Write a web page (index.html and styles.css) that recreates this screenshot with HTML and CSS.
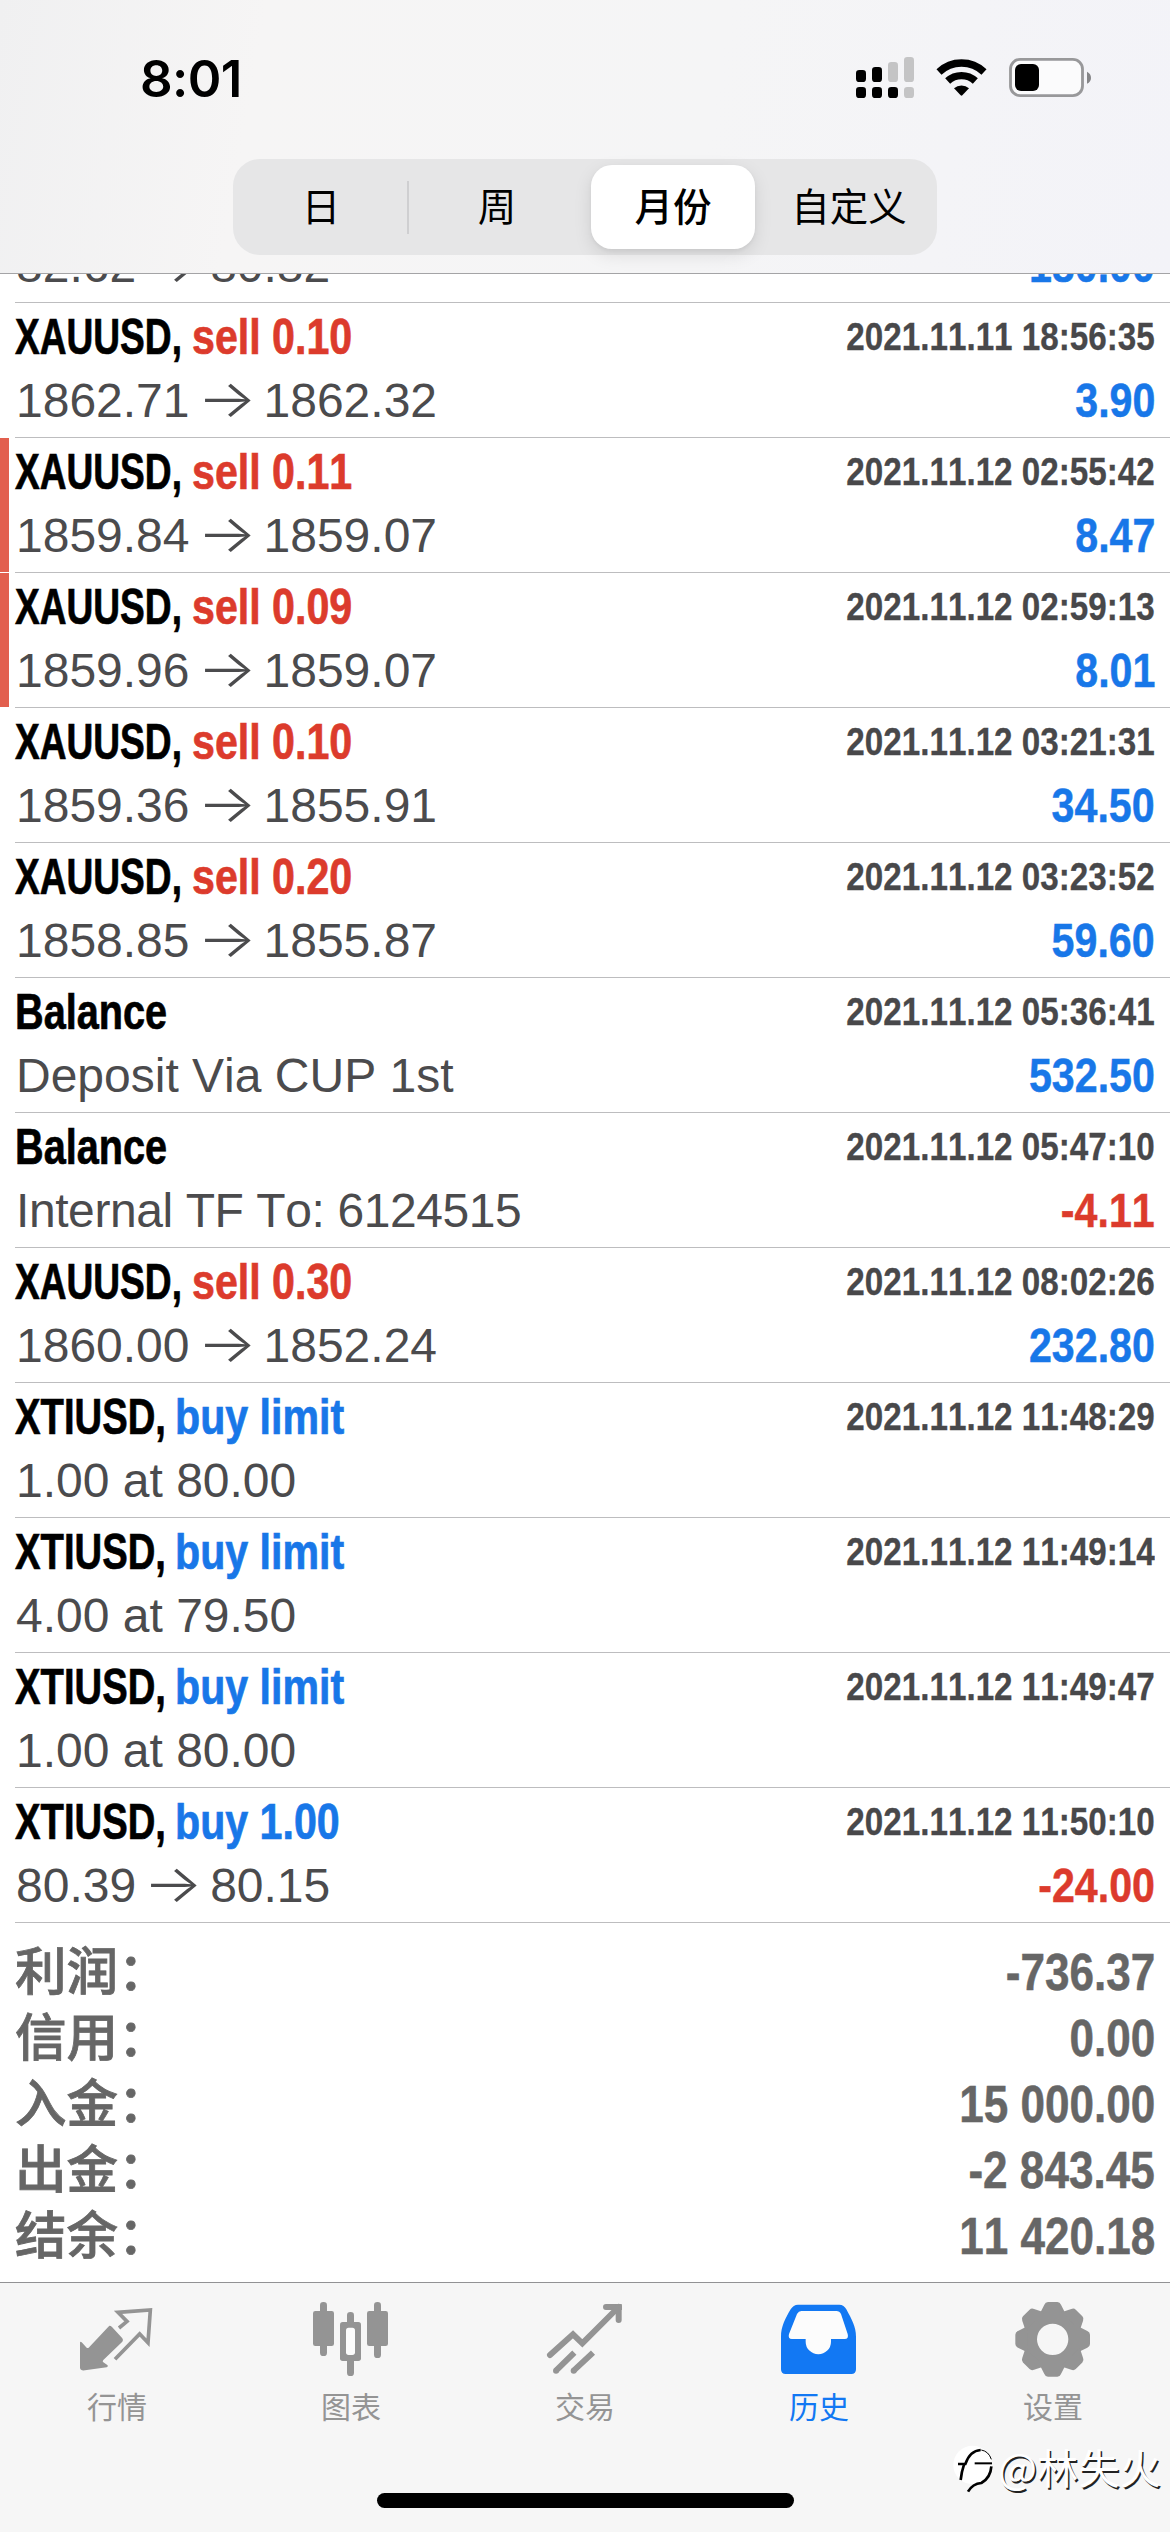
FILE: index.html
```html
<!DOCTYPE html>
<html lang="zh-CN">
<head>
<meta charset="utf-8">
<title>历史</title>
<link rel="stylesheet" href="styles.css">
</head>
<body>
<div class="screen">
  <header class="header">
    <div class="status">
      <span class="time">8:01</span>
      <div class="indicators">
        <svg width="58" height="42" viewBox="48 51 174 126">
          <g fill="#000"><rect x="48" y="90" width="30" height="36" rx="10"/><rect x="96" y="81" width="30" height="45" rx="10"/><rect x="48" y="141" width="30" height="33" rx="10"/><rect x="96" y="141" width="30" height="33" rx="10"/><rect x="144" y="141" width="30" height="33" rx="10"/></g>
          <g fill="#c4c4c5"><rect x="144" y="66" width="30" height="60" rx="10"/><rect x="192" y="51" width="30" height="75" rx="10"/><rect x="192" y="141" width="30" height="33" rx="10"/></g>
        </svg>
        <svg width="51" height="42" viewBox="288 51 153 126">
          <g fill="none" stroke="#000" stroke-width="22"><path d="M297 96a98 98 0 0 1 135 0"/><path d="M323 123a61 61 0 0 1 83 0"/></g>
          <path d="M342 145a33 33 0 0 1 45 0l-20 21q-2 2-5 0z"/>
        </svg>
        <svg width="83" height="42" viewBox="507 51 249 126">
          <rect x="511.500" y="58" width="216" height="109" rx="29" fill="#fbfbfc" stroke="#98989a" stroke-width="8.500"/>
          <rect x="525" y="72" width="72" height="81" rx="18"/>
          <path d="M741 95q12 6 12 18t-12 18z" fill="#858587"/>
        </svg>
      </div>
    </div>
    <nav class="segments">
      <span class="segment divided">日</span>
      <span class="segment">周</span>
      <span class="segment selected">月份</span>
      <span class="segment">自定义</span>
    </nav>
  </header>

  <main class="history">
    <div class="row first"><div class="title"><span class="symbol xti">XTIUSD,</span><span class="op sell">sell 1.00</span></div><time>2021.11.11 16:30:12</time><div class="detail">82.62<i class="arrow">→</i>80.82</div><div class="amount plus">180.00</div></div>
    <div class="row"><div class="title"><span class="symbol xau">XAUUSD,</span><span class="op sell">sell 0.10</span></div><time>2021.11.11 18:56:35</time><div class="detail">1862.71<i class="arrow">→</i>1862.32</div><div class="amount plus">3.90</div></div>
    <div class="row flagged"><div class="title"><span class="symbol xau">XAUUSD,</span><span class="op sell">sell 0.11</span></div><time>2021.11.12 02:55:42</time><div class="detail">1859.84<i class="arrow">→</i>1859.07</div><div class="amount plus">8.47</div></div>
    <div class="row flagged"><div class="title"><span class="symbol xau">XAUUSD,</span><span class="op sell">sell 0.09</span></div><time>2021.11.12 02:59:13</time><div class="detail">1859.96<i class="arrow">→</i>1859.07</div><div class="amount plus">8.01</div></div>
    <div class="row"><div class="title"><span class="symbol xau">XAUUSD,</span><span class="op sell">sell 0.10</span></div><time>2021.11.12 03:21:31</time><div class="detail">1859.36<i class="arrow">→</i>1855.91</div><div class="amount plus">34.50</div></div>
    <div class="row"><div class="title"><span class="symbol xau">XAUUSD,</span><span class="op sell">sell 0.20</span></div><time>2021.11.12 03:23:52</time><div class="detail">1858.85<i class="arrow">→</i>1855.87</div><div class="amount plus">59.60</div></div>
    <div class="row"><div class="title"><span class="balance">Balance</span></div><time>2021.11.12 05:36:41</time><div class="detail">Deposit Via CUP 1st</div><div class="amount plus">532.50</div></div>
    <div class="row"><div class="title"><span class="balance">Balance</span></div><time>2021.11.12 05:47:10</time><div class="detail transfer">Internal TF To: 6124515</div><div class="amount minus">-4.11</div></div>
    <div class="row"><div class="title"><span class="symbol xau">XAUUSD,</span><span class="op sell">sell 0.30</span></div><time>2021.11.12 08:02:26</time><div class="detail">1860.00<i class="arrow">→</i>1852.24</div><div class="amount plus">232.80</div></div>
    <div class="row"><div class="title"><span class="symbol xti">XTIUSD,</span><span class="op buy">buy limit</span></div><time>2021.11.12 11:48:29</time><div class="detail">1.00 at 80.00</div></div>
    <div class="row"><div class="title"><span class="symbol xti">XTIUSD,</span><span class="op buy">buy limit</span></div><time>2021.11.12 11:49:14</time><div class="detail">4.00 at 79.50</div></div>
    <div class="row"><div class="title"><span class="symbol xti">XTIUSD,</span><span class="op buy">buy limit</span></div><time>2021.11.12 11:49:47</time><div class="detail">1.00 at 80.00</div></div>
    <div class="row"><div class="title"><span class="symbol xti">XTIUSD,</span><span class="op buy">buy 1.00</span></div><time>2021.11.12 11:50:10</time><div class="detail">80.39<i class="arrow">→</i>80.15</div><div class="amount minus">-24.00</div></div>

    <dl class="summary">
      <div><dt>利润&#xFF1A;</dt><dd>-736.37</dd></div>
      <div><dt>信用&#xFF1A;</dt><dd>0.00</dd></div>
      <div><dt>入金&#xFF1A;</dt><dd>15 000.00</dd></div>
      <div><dt>出金&#xFF1A;</dt><dd>-2 843.45</dd></div>
      <div><dt>结余&#xFF1A;</dt><dd>11 420.18</dd></div>
    </dl>
  </main>

  <footer class="footer">
    <nav class="tabs">
      <span class="tab">
        <svg viewBox="21 0 300 300">
          <path d="M148 107q5 0 8 4l31 34q4 5 0 10l-57 55q-4 4 0 7l13 9q2 4-3 6l-65 9q-14 2-15-8v-74q0-6 5-2l15 16q3 2 6 0z"/>
          <path d="M177 114l24-20-27-27 97-7-7 98-25-26-74 76" fill="none" stroke="currentColor" stroke-width="11"/>
        </svg>
        行情
      </span>
      <span class="tab">
        <svg viewBox="723 0 300 300">
          <rect x="759" y="63" width="63" height="105" rx="7"/><rect x="780" y="36" width="21" height="162" rx="10"/>
          <rect x="921" y="63" width="63" height="105" rx="7"/><rect x="942" y="36" width="21" height="168" rx="10"/>
          <rect x="840" y="96" width="63" height="117" rx="8"/><rect x="861" y="66" width="21" height="192" rx="10"/>
          <rect x="858" y="113" width="27" height="82" rx="8" fill="#fcfcfc"/>
        </svg>
        图表
      </span>
      <span class="tab">
        <svg viewBox="15 0 300 300">
          <g fill="none" stroke="currentColor" stroke-width="18">
            <path d="M60 195l69-62 28 27L266 51" stroke-linecap="round"/>
            <path d="M228 51h38v39" stroke-linecap="round"/>
            <path d="M78 242l55-54M131 242l58-54"/>
          </g>
          <circle cx="78" cy="242" r="9"/><circle cx="131" cy="242" r="9"/><path d="M257 42h13q6 0 6 6v12h-19z"/>
        </svg>
        交易
      </span>
      <span class="tab active">
        <svg viewBox="717 0 300 300">
          <path d="M804 44H928q14 0 21 14c16 30 29 52 29 82v98q0 14-14 14H767q-14 0-14-14V140c0-30 13-55 29-82q8-14 22-14z"/>
          <path d="M815 63H919q10 0 14 9l20 60q4 15-9 15h-41v8a38 38 0 0 1-76 0v-8h-41q-13 0-9-15l24-60q5-9 13-9z" fill="#fcfcfc"/>
        </svg>
        历史
      </span>
      <span class="tab">
        <svg viewBox="189 0 300 300">
          <defs><path id="tooth" d="M-39-76L-25-104Q-22-112-14-112H14Q22-112 25-104L39-76z"/></defs>
          <g transform="translate(338 148)">
            <circle r="68" fill="none" stroke="currentColor" stroke-width="42"/>
            <use href="#tooth"/><use href="#tooth" transform="rotate(45)"/><use href="#tooth" transform="rotate(90)"/><use href="#tooth" transform="rotate(135)"/><use href="#tooth" transform="rotate(180)"/><use href="#tooth" transform="rotate(225)"/><use href="#tooth" transform="rotate(270)"/><use href="#tooth" transform="rotate(315)"/>
          </g>
        </svg>
        设置
      </span>
    </nav>
    <div class="home"></div>
    <div class="watermark">
      <svg width="42" height="50" viewBox="36 465 126 150">
        <circle cx="98" cy="528" r="58" fill="#fff"/>
        <g fill="none" stroke="#000" stroke-width="8">
          <path d="M54 525h22q14-40 46-42" />
          <path d="M124 483q22 4 30 28" stroke-width="3"/>
          <path d="M72 527q-7 20-10 46"/>
          <path d="M104 523h52" stroke-width="6"/>
          <path d="M154 532q-2 34-30 50-26 2-40 26"/>
        </g>
      </svg>
      <span>@林失火</span>
    </div>
  </footer>
</div>
</body>
</html>
```
FILE: styles.css
```css
* { box-sizing: border-box; }

body {
  margin: 0;
  background: #fff;
  font-family: "Liberation Sans", "Noto Sans CJK SC", sans-serif;
}

.screen {
  width: 1170px;
  height: 2532px;
  display: flex;
  flex-direction: column;
  overflow: hidden;
}

/* Header */
.header {
  flex: none;
  height: 274px;
  border-bottom: 1px solid #a4a4a6;
  background: linear-gradient(100deg, #f0f0f1 0%, #f6f5f5 22%, #f5f5f6 60%, #f3f3f8 100%);
}

.status {
  height: 159px;
  padding: 57px 78px 0 140px;
  display: flex;
  justify-content: space-between;
}

.time {
  font: 600 51px/43px Inter, sans-serif;
  letter-spacing: -.6px;
}

.indicators {
  display: flex;
  gap: 22px;
}

.segments {
  width: 704px;
  height: 96px;
  margin: 0 auto;
  display: grid;
  grid-template-columns: repeat(4, 1fr);
  border-radius: 27px;
  background: #e6e6e7;
  font: 400 38.5px/91px "Noto Sans CJK SC", sans-serif;
  text-align: center;
}

.divided {
  background: linear-gradient(#cfcfd1, #cfcfd1) right center / 2px 53px no-repeat;
}

.selected {
  margin: 6px;
  border-radius: 21px;
  background: #fff;
  box-shadow: 0 6px 18px rgba(0, 0, 0, .1), 0 2px 4px rgba(0, 0, 0, .05);
  font-weight: 500;
  line-height: 79px;
}

/* Deals */
.history {
  flex: 1;
  overflow: hidden;
  min-height: 0;
}

.row {
  height: 135px;
  padding: 4px 15px 0;
  display: grid;
  grid-template-columns: 1fr auto;
  grid-template-rows: 60px 60px;
  row-gap: 3px;
  line-height: 60px;
  white-space: nowrap;
  font-kerning: none;
  background: linear-gradient(#bdbdbf, #bdbdbf) 15px 100% / 100% 1px no-repeat;
}

.first { margin-top: -106px; }

.flagged {
  background:
    linear-gradient(#bdbdbf, #bdbdbf) 15px 100% / 100% 1px no-repeat,
    linear-gradient(#e25f4e, #e25f4e) 0 0 / 9px 134px no-repeat;
}

.title {
  display: flex;
  font-size: 50px;
  font-weight: 700;
  -webkit-text-stroke: .7px currentColor;
}

.symbol,
.op,
.balance {
  transform-origin: left;
}

.symbol { transform: scaleX(.742); }
.xau { width: 177px; }
.xti { width: 160px; }
.xti { transform: scaleX(.765); }
.op { transform: scaleX(.823); }
.balance { transform: scaleX(.793); }

.sell,
.minus { color: #dc3b2c; }

.buy,
.plus { color: #1877e8; }

time {
  transform: scaleX(.841);
  transform-origin: right;
  justify-self: end;
  font-size: 39.5px;
  line-height: 58px;
  font-weight: 700;
  color: #48484a;
  -webkit-text-stroke: .3px currentColor;
}

.detail {
  padding-left: 1px;
  font-size: 48px;
  line-height: 61px;
  color: #4b4b4d;
}

.transfer { letter-spacing: -.42px; }

.arrow {
  display: inline-block;
  width: 74px;
  font: normal 300 52px/50px Inter, sans-serif;
  text-align: center;
  transform: scaleX(1.2);
}

.amount {
  transform: scaleX(.84);
  transform-origin: right;
  justify-self: end;
  font-size: 49px;
  font-weight: 700;
  -webkit-text-stroke: .5px currentColor;
}

/* Totals */
.summary {
  margin: 0;
  padding: 16px 15px 0;
  color: #666;
}

.summary div {
  height: 66px;
  display: flex;
  justify-content: space-between;
  line-height: 66px;
}

.summary dt {
  font: 500 51.5px/57px "Noto Sans CJK SC", sans-serif;
  -webkit-text-stroke: .8px currentColor;
}

.summary dd {
  margin: 0;
  transform: scaleX(.848);
  transform-origin: right;
  font-size: 52px;
  font-weight: 700;
  font-kerning: none;
  -webkit-text-stroke: .5px currentColor;
}

/* Tab bar */
.footer {
  position: relative;
  flex: none;
  height: 250px;
  border-top: 1px solid #929294;
  background: #f6f6f6;
}

.tabs {
  height: 210px;
  padding-top: 7px;
  display: grid;
  grid-template-columns: repeat(5, 1fr);
}

.tab {
  display: flex;
  flex-direction: column;
  align-items: center;
  font: 400 30px/31px "Noto Sans CJK SC", sans-serif;
  color: #949494;
}

.tab svg {
  width: 100px;
  height: 100px;
  fill: currentColor;
}

.active { color: #1278f3; }

.home {
  width: 417px;
  height: 15px;
  margin: 0 auto;
  border-radius: 8px;
  background: #000;
}

.watermark {
  position: absolute;
  right: 9px;
  top: 161px;
  display: flex;
  align-items: flex-start;
  gap: 4px;
  font: 400 41.3px/44px "Noto Sans CJK SC", sans-serif;
  color: #fff;
  text-shadow: 1.5px 1.5px 0 #222;
}
```
